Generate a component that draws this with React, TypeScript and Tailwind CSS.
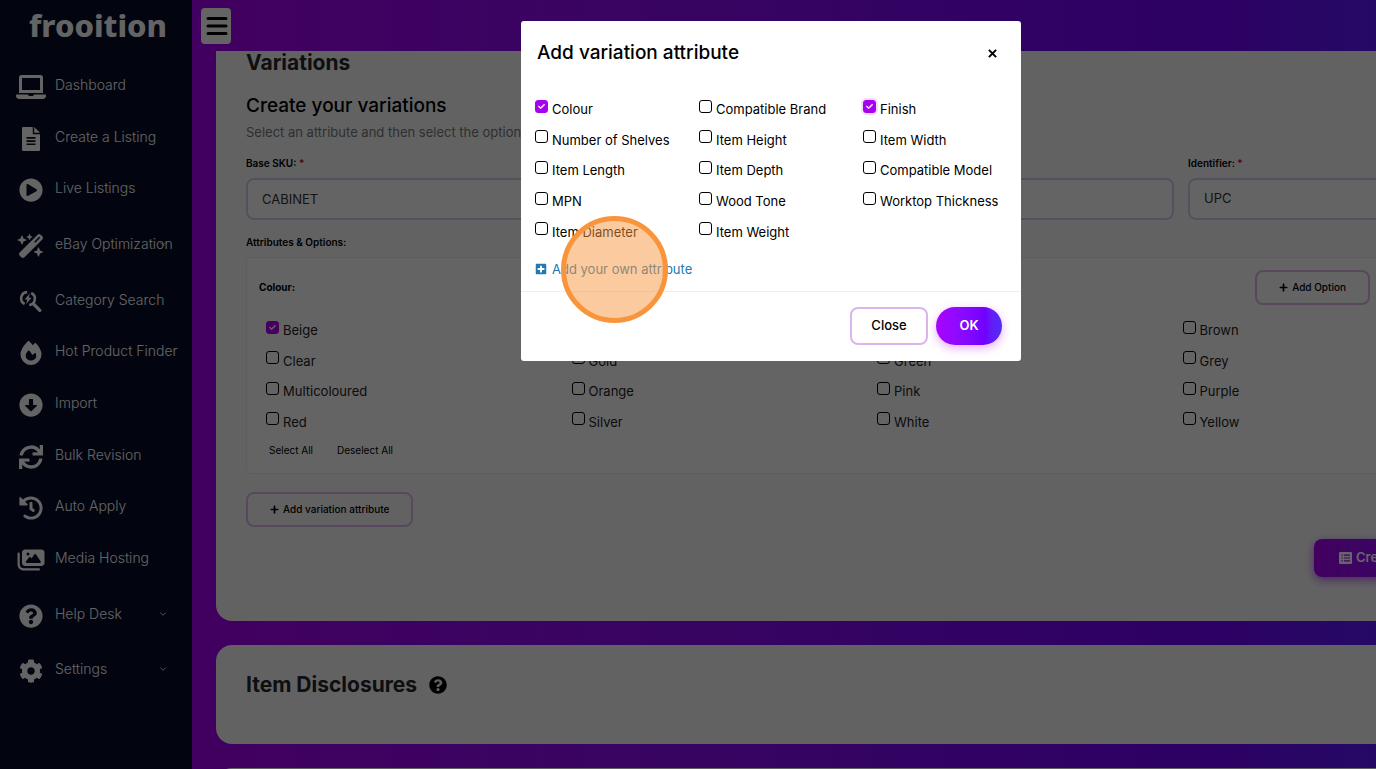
import React from "react";
import clsx from "clsx";
import {
  FaArrowAltCircleDown,
  FaCog,
  FaHistory,
  FaLaptop,
  FaPlayCircle,
  FaPlus,
  FaPlusSquare,
  FaQuestionCircle,
  FaSync,
} from "react-icons/fa";
import {
  FaCheck,
  FaFire,
  FaImages,
  FaWandMagicSparkles,
} from "react-icons/fa6";
import { ChevronDown } from "lucide-react";

const SearchBolt = ({ className }: { className?: string }) => (
  <svg viewBox="0 0 24 24" className={className} fill="none">
    <path
      d="M8.2 2.1A6.3 6.3 0 0 0 5.6 14M10.2 15A6.3 6.3 0 0 0 12.2 3"
      stroke="currentColor"
      strokeWidth="2.6"
    />
    <path d="M10.8 3.6 5.6 9.4h2.7L7.2 14l5.4-6.2H9.8z" fill="currentColor" />
    <path
      d="m14.2 13.6 6.6 6.8"
      stroke="currentColor"
      strokeWidth="3.4"
      strokeLinecap="round"
    />
  </svg>
);

const FileLines = ({ className }: { className?: string }) => (
  <svg viewBox="0 0 24 24" className={className}>
    <path
      fill="currentColor"
      fillRule="evenodd"
      d="M4 0h9.8v7.2H21V23a1 1 0 0 1-1 1H4a1 1 0 0 1-1-1V1a1 1 0 0 1 1-1zm3.5 10v1.7h9V10zm0 3.2v1.7h9v-1.7zm0 3.2v1.7h9v-1.7z"
    />
    <path fill="currentColor" d="M15.2 0 21 5.8h-5.8z" />
  </svg>
);

const ListAlt = ({ className }: { className?: string }) => (
  <svg viewBox="0 0 13 12" className={className}>
    <path
      fill="currentColor"
      fillRule="evenodd"
      d="M1 0h11a1 1 0 0 1 1 1v10a1 1 0 0 1-1 1H1a1 1 0 0 1-1-1V1a1 1 0 0 1 1-1zm1.5 2.5v1.2h1.3V2.5zm2.5 0v1.2h6V2.5zM2.500 5.400v1.200h1.300V5.400zm2.500 0v1.200h6V5.400zM2.500 8.300v1.200h1.300V8.300zm2.500 0v1.200h6V8.300z"
    />
  </svg>
);

const navItems = [
  { label: "Dashboard", icon: FaLaptop },
  { label: "Create a Listing", icon: FileLines },
  { label: "Live Listings", icon: FaPlayCircle },
  { label: "eBay Optimization", icon: FaWandMagicSparkles, chevron: true, tall: true },
  { label: "Category Search", icon: SearchBolt },
  { label: "Hot Product Finder", icon: FaFire },
  { label: "Import", icon: FaArrowAltCircleDown },
  { label: "Bulk Revision", icon: FaSync },
  { label: "Auto Apply", icon: FaHistory },
  { label: "Media Hosting", icon: FaImages },
  { label: "Help Desk", icon: FaQuestionCircle, chevron: true, tall: true },
  { label: "Settings", icon: FaCog, chevron: true },
];

const colours = [
  "Beige", "Black", "Blue", "Brown",
  "Clear", "Gold", "Green", "Grey",
  "Multicoloured", "Orange", "Pink", "Purple",
  "Red", "Silver", "White", "Yellow",
];

const attributes = [
  "Colour", "Compatible Brand", "Finish",
  "Number of Shelves", "Item Height", "Item Width",
  "Item Length", "Item Depth", "Compatible Model",
  "MPN", "Wood Tone", "Worktop Thickness",
  "Item Diameter", "Item Weight",
];

const CheckOption = ({
  label,
  checked = false,
  focused = false,
}: {
  label: string;
  checked?: boolean;
  focused?: boolean;
}) => (
  <label className="flex items-center gap-1 pl-[10px] text-[13px] leading-5">
    <span className="relative mb-[6px] flex size-[13px] shrink-0">
      <input
        type="checkbox"
        defaultChecked={checked}
        className={clsx(
          "peer size-[13px] appearance-none rounded-[3px] border border-black checked:border-[#a800f0] checked:bg-[#a800f0]",
          focused && "shadow-[0_0_0_2px_#f6dcfd]"
        )}
      />
      <FaCheck className="pointer-events-none absolute top-[3px] left-[3px] hidden size-[7px] stroke-white stroke-[60px] text-white peer-checked:block" />
    </span>
    {label}
  </label>
);

const Sidebar = () => (
  <aside className="w-48 shrink-0 bg-[#050b26] text-[#fafafa]">
    <a
      href="#"
      className="block h-[59px] pl-[29px] font-['Noto_Sans',sans-serif] text-[31px] leading-[50px] font-extrabold"
    >
      frooition
    </a>
    <nav>
      <ul className="flex h-[636px] flex-col">
        {navItems.map(({ label, icon: Icon, chevron, tall }) => (
          <li key={label} className={clsx("flex flex-auto", tall && "py-1")}>
            <a href="#" className="relative flex w-full items-center pl-4 text-sm font-light">
              <span className="mt-1 flex w-[30px] shrink-0 justify-center">
                <Icon className="h-6 w-[30px]" />
              </span>
              <span className="pl-[9px] whitespace-nowrap">{label}</span>
              {chevron && <ChevronDown className="absolute right-6 size-[10px]" />}
            </a>
          </li>
        ))}
      </ul>
    </nav>
  </aside>
);

const OutlineButton = ({ children }: { children: React.ReactNode }) => (
  <button className="flex h-[35px] items-center gap-1 rounded-lg border-2 border-[#dab4ec] px-[22px] text-[10px] font-medium whitespace-nowrap">
    <FaPlus className="size-[9px]" />
    {children}
  </button>
);

const Variations = () => (
  <section className="rounded-b-2xl bg-[#f5f5f8] px-[30px] pb-[44px]">
    <h2 className="text-[21px] leading-6 font-bold text-[#26262b]">Variations</h2>
    <h3 className="mt-4 text-[19px] leading-[30px] font-medium">Create your variations</h3>
    <p className="text-[13px] leading-[22px] text-[#777]">
      Select an attribute and then select the options
    </p>

    <div className="mt-3 grid grid-cols-4 gap-[14px]">
      <div className="col-span-3">
        <label htmlFor="sku" className="block text-[10px] leading-4 font-semibold">
          Base SKU: <span className="text-[#d1001f]">*</span>
        </label>
        <input
          id="sku"
          defaultValue="CABINET"
          className="mt-[7px] h-[42px] w-full rounded-lg border-2 border-[#dcc6ea] bg-[#fafafa] px-[14px] text-[13px] text-[#333]"
        />
      </div>
      <div>
        <label htmlFor="identifier" className="block text-[10px] leading-4 font-semibold">
          Identifier: <span className="text-[#d1001f]">*</span>
        </label>
        <select
          id="identifier"
          className="mt-[7px] h-[42px] w-full appearance-none rounded-lg border-2 border-[#dcc6ea] bg-[#fafafa] px-[14px] text-[13px] text-[#333]"
        >
          <option>UPC</option>
        </select>
      </div>
    </div>

    <p className="mt-[14px] text-[10px] leading-4 font-semibold">Attributes &amp; Options:</p>
    <div className="mt-[7px] rounded border border-[#e8e8ee] bg-[#fafafa] px-[9px] pt-3 pb-[15px]">
      <div className="flex items-center justify-between pr-[108px] pl-[3px]">
        <span className="text-[10px] font-bold">Colour:</span>
        <OutlineButton>Add Option</OutlineButton>
      </div>
      <div className="mt-[10px] grid h-[122px] auto-rows-fr grid-cols-4 text-[#222]">
        {colours.map((c) => (
          <CheckOption key={c} label={c} checked={c === "Beige"} />
        ))}
      </div>
      <div className="mt-[5px] flex gap-6 pl-[13px] text-[10px] leading-4">
        <button>Select All</button>
        <button>Deselect All</button>
      </div>
    </div>

    <div className="mt-[18px] flex">
      <OutlineButton>Add variation attribute</OutlineButton>
    </div>
    <div className="mt-3 flex justify-end">
      <button className="flex h-[38px] w-[174px] items-center gap-1 rounded-lg bg-linear-to-r from-[#a800f0] to-[#6a00ff] pl-[25px] text-[13px] font-semibold text-white shadow-[0_3px_10px_#c060f0]">
        <ListAlt className="h-3 w-[13px]" />
        Create
      </button>
    </div>
  </section>
);

const AttributeModal = () => (
  <div
    role="dialog"
    aria-labelledby="modal-title"
    className="relative w-[500px] rounded-[3px] bg-white text-black"
  >
    <div className="flex items-center justify-between px-4 pt-4 pb-[25px]">
      <h4 id="modal-title" className="text-[19px] leading-8 font-medium">
        Add variation attribute
      </h4>
      <button aria-label="Close dialog" className="flex size-[26px] items-center justify-center">
        <svg viewBox="0 0 10 10" className="size-[9px]" stroke="currentColor" strokeWidth="2.2">
          <path d="M1 1l8 8M9 1L1 9" />
        </svg>
      </button>
    </div>
    <div className="px-1 pb-3">
      <div className="grid h-[153px] auto-rows-fr grid-cols-3">
        {attributes.map((a) => (
          <CheckOption
            key={a}
            label={a}
            checked={a === "Colour" || a === "Finish"}
            focused={a === "Finish"}
          />
        ))}
      </div>
      <a
        href="#"
        className="mt-3 ml-[10px] flex items-center gap-[5px] text-[13px] leading-5 text-[#2478ae]"
      >
        <FaPlusSquare className="size-3" />
        Add your own attribute
      </a>
    </div>
    <div className="flex justify-end gap-2 border-t border-[#eee] pt-[15px] pr-[19px] pb-4 text-[13px]">
      <button className="h-[38px] w-[78px] rounded-lg border-2 border-[#dab4ec] font-medium">
        Close
      </button>
      <button className="h-[38px] w-[66px] rounded-full bg-linear-to-r from-[#a800ff] via-[#7000ff] via-75% to-[#4d2df0] font-semibold text-white shadow-[0_3px_10px_#e6a8fa]">
        OK
      </button>
    </div>
    {/* click highlight */}
    <div className="pointer-events-none absolute top-[195px] left-10 size-[107px] rounded-full border-[5px] border-[#f8953c] bg-[#f8953f]/50" />
  </div>
);

export default function App() {
  return (
    <div className="h-screen overflow-hidden font-['Inter',sans-serif] text-black">
      <div className="relative flex min-h-screen w-[calc(100%+166px)]">
        <Sidebar />
        <div className="min-w-0 flex-1 bg-linear-to-r from-[#a500f0] via-[#7000fa] via-75% to-[#4a20ff]">
          <header className="flex h-[51px] items-start pt-2 pl-[9px]">
            <button
              aria-label="Menu"
              className="flex h-9 w-[30px] items-center justify-center rounded bg-[#fafafa]"
            >
              <svg
                viewBox="0 0 22 20"
                className="ml-[2px] h-5 w-[22px]"
                stroke="currentColor"
                strokeWidth="3"
                strokeLinecap="round"
              >
                <path d="M2 2.5h18M2 10h18M2 17.5h18" />
              </svg>
            </button>
          </header>
          <main className="flex flex-col gap-6 px-6">
            <Variations />
            <section className="flex h-[99px] items-start gap-3 rounded-2xl bg-[#f5f5f8] px-[30px] pt-7">
              <h2 className="text-[21px] leading-6 font-bold text-[#26262b]">Item Disclosures</h2>
              <FaQuestionCircle className="mt-[3px] size-[18px]" />
            </section>
            <section className="h-10 rounded-2xl bg-[#f5f5f8]" />
          </main>
        </div>
        <div className="absolute inset-0 flex items-start justify-center bg-black/60 pt-[21px]">
          <AttributeModal />
        </div>
      </div>
    </div>
  );
}
